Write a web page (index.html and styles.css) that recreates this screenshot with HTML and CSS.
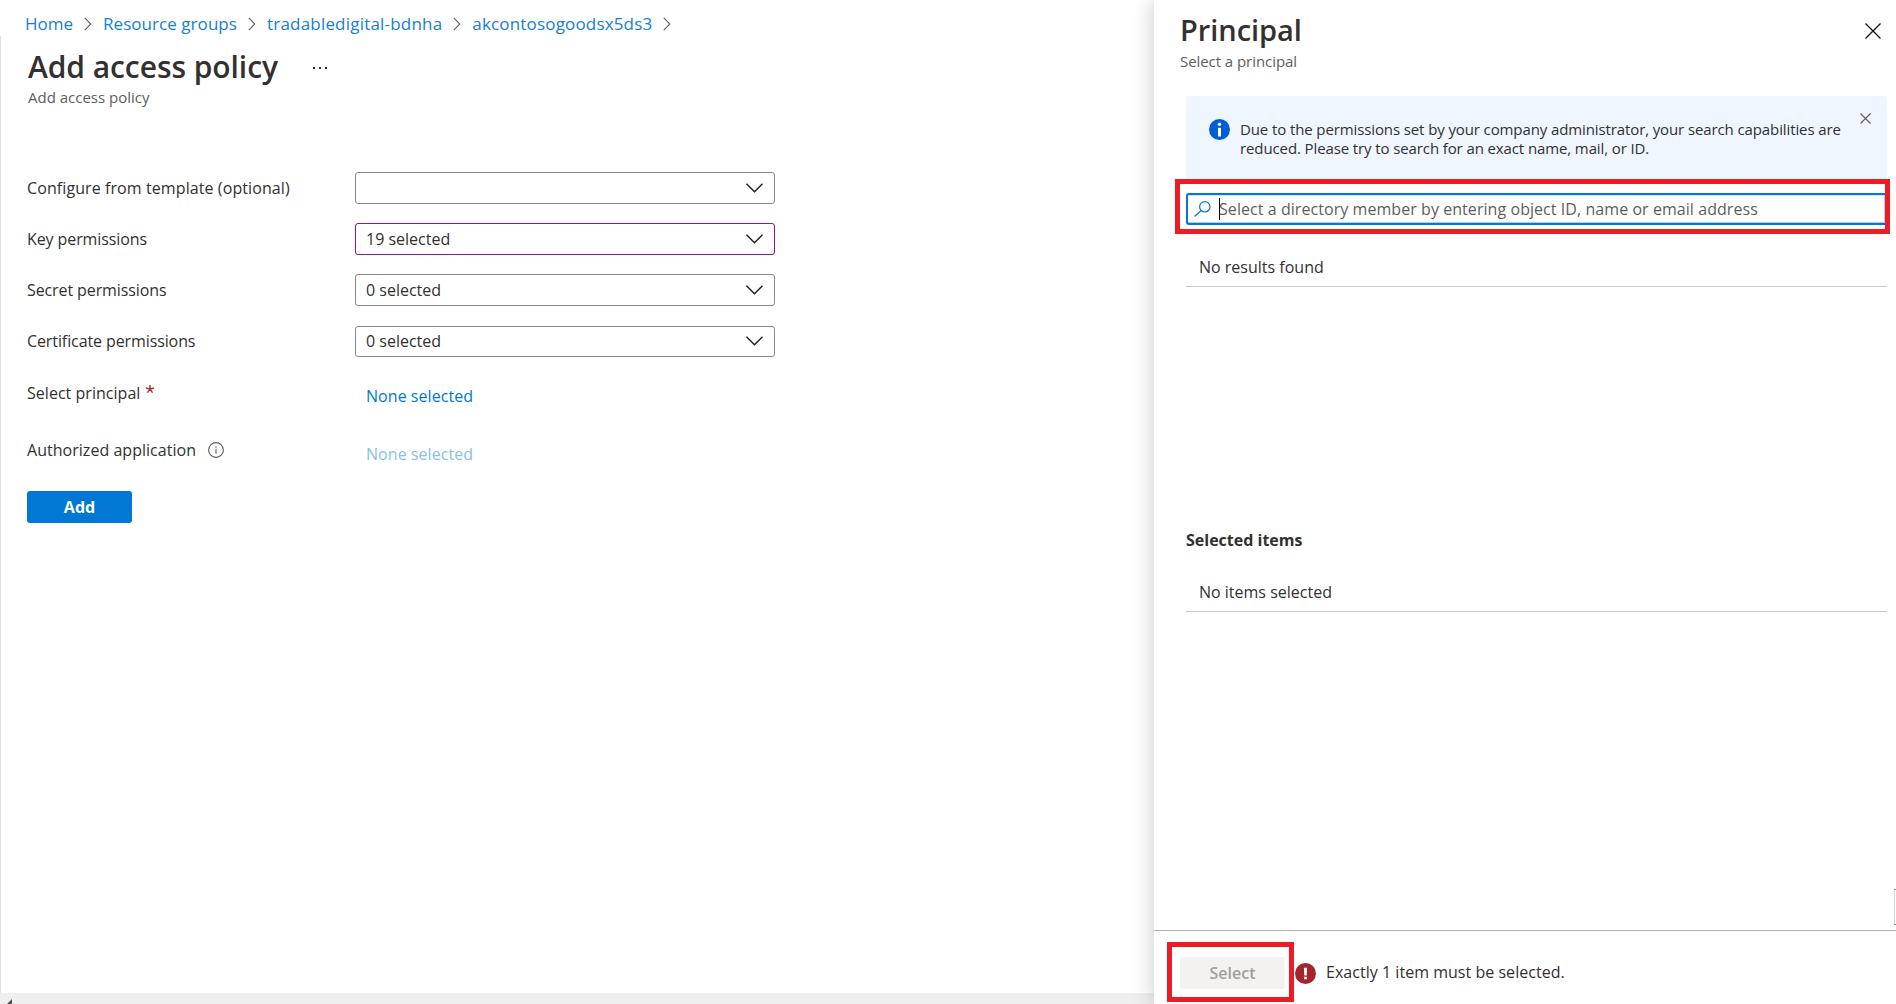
FILE: index.html
```html
<!DOCTYPE html>
<html lang="en">
<head>
<meta charset="utf-8">
<title>Add access policy</title>
<link rel="stylesheet" href="styles.css">
</head>
<body>
<div class="portal">
  <main class="blade">
    <nav class="breadcrumb">
      <a class="crumb-home">Home</a>
      <svg class="sep" viewBox="0 0 8 14"><path d="M.8.8 6.8 7 .8 13.2"/></svg>
      <a class="crumb-groups">Resource groups</a>
      <svg class="sep" viewBox="0 0 8 14"><path d="M.8.8 6.8 7 .8 13.2"/></svg>
      <a class="crumb-group">tradabledigital-bdnha</a>
      <svg class="sep" viewBox="0 0 8 14"><path d="M.8.8 6.8 7 .8 13.2"/></svg>
      <a class="crumb-vault">akcontosogoodsx5ds3</a>
      <svg class="sep" viewBox="0 0 8 14"><path d="M.8.8 6.8 7 .8 13.2"/></svg>
    </nav>
    <header class="blade-head">
      <h1 class="title">Add access policy</h1>
      <span class="more"><i></i><i></i><i></i></span>
    </header>
    <p class="subtitle">Add access policy</p>

    <form class="policy-form">
      <div class="row">
        <label class="label-template">Configure from template (optional)</label>
        <div class="select"><span></span><svg class="chevron" viewBox="0 0 17 10"><path d="M.5.7 8.5 8.8 16.5.7"/></svg></div>
      </div>
      <div class="row">
        <label class="label-permissions">Key permissions</label>
        <div class="select select-edited"><span>19 selected</span><svg class="chevron" viewBox="0 0 17 10"><path d="M.5.7 8.5 8.8 16.5.7"/></svg></div>
      </div>
      <div class="row">
        <label class="label-permissions">Secret permissions</label>
        <div class="select"><span>0 selected</span><svg class="chevron" viewBox="0 0 17 10"><path d="M.5.7 8.5 8.8 16.5.7"/></svg></div>
      </div>
      <div class="row">
        <label class="label-permissions">Certificate permissions</label>
        <div class="select select-short"><span>0 selected</span><svg class="chevron" viewBox="0 0 17 10"><path d="M.5.7 8.5 8.8 16.5.7"/></svg></div>
      </div>
      <div class="row row-principal">
        <label>Select principal<svg class="required" viewBox="0 0 8 8"><path d="M4 4.2V0M4 4.2 0 2.9M4 4.2l4-1.3M4 4.2 1.5 7.6M4 4.2l2.5 3.4"/></svg></label>
        <a class="pick">None selected</a>
      </div>
      <div class="row row-application">
        <label>Authorized application<svg class="hint" viewBox="0 0 16 16"><circle cx="8" cy="8" r="7.4"/><path d="M8 4.2v1.5M8 6.8v5"/></svg></label>
        <a class="pick pick-disabled">None selected</a>
      </div>
      <button type="button" class="btn btn-primary">Add</button>
    </form>
    <div class="scrollbar"><svg viewBox="0 0 5 5"><path d="M5 0v5H0z"/></svg></div>
  </main>

  <aside class="panel">
    <header class="panel-head">
      <h2 class="panel-title">Principal</h2>
      <svg class="close" viewBox="0 0 16 16"><path d="m.5.5 15 15M15.5.5l-15 15"/></svg>
    </header>
    <p class="panel-subtitle">Select a principal</p>
    <div class="notice">
      <svg class="info" viewBox="0 0 21 21"><circle cx="10.5" cy="10.5" r="10.5"/><circle class="mark" cx="10.5" cy="5.3" r="1.7"/><path class="mark" d="M9 8.8h3v8.7H9z"/></svg>
      <p class="notice-text">Due to the permissions set by your company administrator, your search capabilities are<br>reduced. Please try to search for an exact name, mail, or ID.</p>
      <svg class="dismiss" viewBox="0 0 11 11"><path d="m.5.5 10 10M10.5.5l-10 10"/></svg>
    </div>
    <div class="search-frame">
      <div class="search">
        <svg class="lens" viewBox="0 0 17 16"><circle cx="10.8" cy="5.8" r="5.2"/><path d="M7.1 9.5.5 15.5"/></svg>
        <i class="caret"></i>
        <span class="placeholder">Select a directory member by entering object ID, name or email address</span>
      </div>
    </div>
    <div class="list-row results">No results found</div>
    <h3 class="selected-title">Selected items</h3>
    <div class="list-row">No items selected</div>
    <i class="edge-tab"></i>
    <footer class="panel-foot">
      <div class="select-frame"><button type="button" class="btn btn-disabled">Select</button></div>
      <svg class="error" viewBox="0 0 21 21"><circle cx="10.5" cy="10.5" r="10.5"/><path class="mark" d="M8.9 4.8h3.2l-.4 7.6H9.3zM9.1 13.8h2.8v2.4H9.1z"/></svg>
      <span class="error-text">Exactly 1 item must be selected.</span>
    </footer>
  </aside>
</div>
</body>
</html>
```
FILE: styles.css
```css
* { box-sizing: border-box; }
body { margin: 0; background: #fff; color: #323130; font: 16px/20px "Open Sans", "Noto Sans", sans-serif; overflow: hidden; }
h1, h2, h3, p { margin: 0; }
svg { display: block; flex: none; fill: none; }
span, a, label, h1, h2, h3, p { white-space: nowrap; }

.portal { display: flex; width: 1896px; height: 1004px; }
.blade { display: flex; flex-direction: column; width: 1154px; }
.blade::before { content: ""; position: absolute; left: 0; top: 36px; width: 1px; height: 957px; background: #e1e1e1; }

.breadcrumb { display: flex; align-items: center; height: 24px; margin: 12px 0 0 25px; font-size: 17px; }
.breadcrumb a { color: #1580d4; }
.crumb-groups { letter-spacing: .05px; }
.crumb-group { letter-spacing: .2px; }
.crumb-vault { letter-spacing: .17px; }
.sep { width: 8px; height: 14px; margin: 0 11px; stroke: #605e5c; stroke-width: 1.1; }

.blade-head { display: flex; align-items: center; height: 40px; margin: 11px 0 0 28px; }
.title, .panel-title { line-height: 40px; font-weight: 600; }
.title { font-size: 30px; letter-spacing: -.07px; }
.panel-title { margin-top: -1px; font-size: 29px; letter-spacing: -.05px; }
.more { display: flex; gap: 4px; margin: 2px 0 0 35px; }
.more i { width: 2px; height: 2px; background: #323130; }
.subtitle, .panel-subtitle { color: #605e5c; font-size: 15px; }
.subtitle { margin: 0 0 0 28px; }
.panel-subtitle { letter-spacing: -.06px; }

.policy-form { display: flex; flex-direction: column; gap: 19px; margin: 65px 0 0 27px; }
.row { display: grid; grid-template-columns: 328px 420px; align-items: center; height: 32px; }
.row label { display: flex; align-items: center; letter-spacing: .03px; }
.row .label-template { letter-spacing: .09px; }
.row .label-permissions { letter-spacing: -.1px; }
.select { display: flex; align-items: center; justify-content: space-between; height: 32px; padding: 0 11px 0 10px; border: 1px solid #8a8886; border-radius: 3px; }
.select-edited { border-color: #881798; }
.select-short { height: 31px; }
.chevron { width: 17px; height: 10px; stroke: #201f1e; stroke-width: 1.4; }
.row-principal { margin-top: 1px; }
.row-application { margin-top: 6px; }
.required { width: 8px; height: 8px; margin: -9px 0 0 6px; stroke: #a4262c; stroke-width: 1.4; }
.hint { width: 16px; height: 16px; margin-left: 12px; stroke: #605e5c; stroke-width: 1.1; }
.pick { padding: 5px 0 0 11px; color: #0078d4; letter-spacing: .05px; }
.pick-disabled { padding-top: 8px; color: #8abfe9; }
.btn { width: 105px; height: 32px; padding: 0; border: 0; border-radius: 3px; font: 600 16px/20px "Open Sans", "Noto Sans", sans-serif; }
.btn-primary { margin-top: 6px; background: #0078d4; color: #fff; font-weight: 700; }

.scrollbar { height: 11px; margin-top: auto; padding: 6px 0 0 7px; background: #efefef; }
.scrollbar svg { width: 5px; height: 5px; fill: #505050; }

.panel { position: relative; display: flex; flex-direction: column; width: 742px; background: #fff; box-shadow: 0 0 20px rgba(0, 0, 0, .22); }
.panel-head { display: flex; justify-content: space-between; margin: 11px 15px 0 26px; height: 40px; }
.close { width: 16px; height: 16px; margin-top: 12px; stroke: #111; stroke-width: 1.3; }
.panel-subtitle { margin: 0 0 1px 26px; }
.notice { display: flex; height: 84px; margin: 24px 9px 0 32px; padding: 17px 16px 0 23px; border-radius: 3px 3px 0 0; background: #eff6ff; font-size: 15px; line-height: 19px; }
.info { width: 21px; height: 21px; margin: 6px 10px 0 0; fill: #015cda; }
.mark { fill: #fff; }
.notice-text { margin-top: 7px; letter-spacing: -.11px; }
.dismiss { width: 11px; height: 11px; margin-left: auto; stroke: #605e5c; stroke-width: 1.1; }
.search-frame { height: 55px; margin: -1px 6px 0 21px; padding: 9px 0 0 6px; border: 5px solid #ed1c24; background: #fff; }
.search { display: flex; align-items: center; height: 32px; padding-left: 6px; border: solid #0078d4; border-width: 2px 0 2px 2px; border-radius: 3px 0 0 3px; box-shadow: inset -1px -1px #a6d0f2, inset 0 1px #d5e9f8; }
.lens { width: 17px; height: 16px; stroke: #0078d4; stroke-width: 1.2; }
.caret { width: 1px; height: 22px; margin-left: 8px; background: #000; }
.placeholder { margin-left: -1px; color: #605e5c; letter-spacing: .06px; }
.list-row { height: 41px; margin: 0 9px 0 32px; padding: 11px 14px 0 13px; border-bottom: 1px solid #c8c8c8; }
.results { margin-top: 12px; }
.selected-title { margin: 243px 0 21px 32px; font-size: 16px; line-height: 20px; font-weight: 700; }
.edge-tab { position: absolute; right: 0; top: 889px; width: 2px; height: 36px; border: solid #8a8f9c; border-width: 1px 0; box-shadow: inset 1px 0 #d5d9e4; }
.panel-foot { display: flex; height: 74px; margin-top: auto; padding: 11px 0 0 13px; border-top: 1px solid #b3b0ad; }
.select-frame { width: 127px; height: 60px; padding: 10px 8px; border: 5px solid #ed1c24; }
.btn-disabled { background: #f3f2f1; color: #a19f9d; }
.error { width: 21px; height: 21px; margin: 21px 10px 0 1px; fill: #a4262c; }
.error-text { margin-top: 20px; letter-spacing: .03px; }
```
